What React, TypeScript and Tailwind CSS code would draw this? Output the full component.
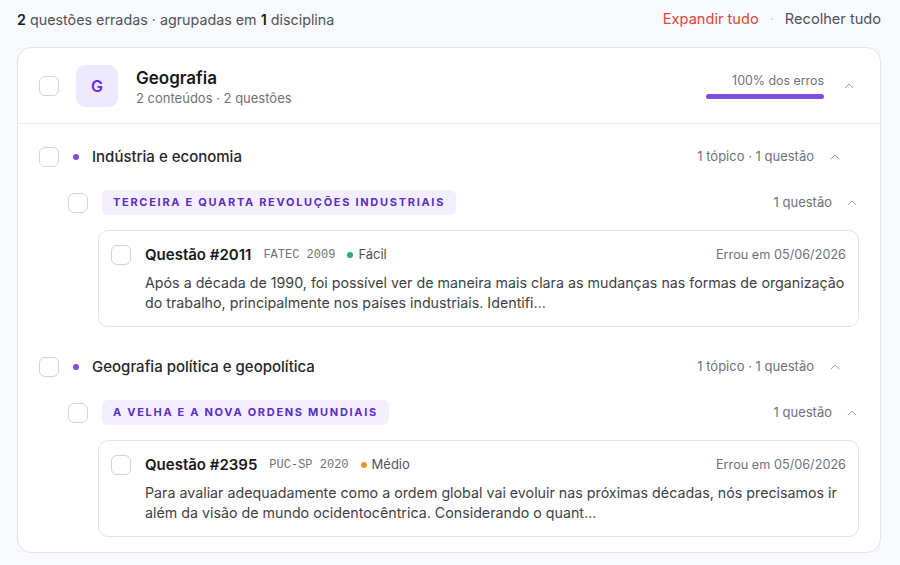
import { ChevronUp } from "lucide-react"

type Question = {
  id: number
  source: string
  level: "Fácil" | "Médio"
  date: string
  text: string
}

type Topic = {
  title: string
  meta: string
  subtopic: string
  subMeta: string
  question: Question
}

const topics: Topic[] = [
  {
    title: "Indústria e economia",
    meta: "1 tópico · 1 questão",
    subtopic: "Terceira e quarta revoluções industriais",
    subMeta: "1 questão",
    question: {
      id: 2011,
      source: "FATEC 2009",
      level: "Fácil",
      date: "Errou em 05/06/2026",
      text: "Após a década de 1990, foi possível ver de maneira mais clara as mudanças nas formas de organização do trabalho, principalmente nos países industriais. Identifi…",
    },
  },
  {
    title: "Geografia política e geopolítica",
    meta: "1 tópico · 1 questão",
    subtopic: "A velha e a nova ordens mundiais",
    subMeta: "1 questão",
    question: {
      id: 2395,
      source: "PUC-SP 2020",
      level: "Médio",
      date: "Errou em 05/06/2026",
      text: "Para avaliar adequadamente como a ordem global vai evoluir nas próximas décadas, nós precisamos ir além da visão de mundo ocidentocêntrica. Considerando o quant…",
    },
  },
]

function Checkbox() {
  return <div className="w-5 h-5 shrink-0 rounded-[6px] border border-[#d4d4d8] bg-white" />
}

function QuestionCard({ q }: { q: Question }) {
  return (
    <div className="ml-[59px] rounded-[10px] border border-[#e4e4e7] bg-white pl-3 pr-3 pt-[14px] pb-[13px] flex gap-[14px]">
      <Checkbox />
      <div className="flex-1 min-w-0">
        <div className="flex items-center h-5">
          <span className="text-[15px] font-semibold text-[#18181b]">Questão #{q.id}</span>
          <span className="ml-3 text-[12px] text-[#71717a]" style={{ fontFamily: "'Liberation Mono', monospace" }}>
            {q.source}
          </span>
          <span className="ml-3 flex items-center gap-[5px] text-[13px] text-[#52525b]">
            <span className={q.level === "Fácil" ? "w-[6px] h-[6px] rounded-full bg-[#22b07d]" : "w-[6px] h-[6px] rounded-full bg-[#f0932b]"} />
            {q.level}
          </span>
          <span className="ml-auto text-[12.7px] text-[#71717a]">{q.date}</span>
        </div>
        <p className="mt-[8px] text-[14.25px] leading-5 text-[#3f3f46]">{q.text}</p>
      </div>
    </div>
  )
}

function TopicBlock({ t }: { t: Topic }) {
  return (
    <div>
      <div className="flex items-center h-5 pr-[16px]">
        <Checkbox />
        <span className="ml-[14px] w-[6px] h-[6px] rounded-full bg-[#7c4fe0]" />
        <span className="ml-[13px] text-[15px] font-medium text-[#27272a]">{t.title}</span>
        <span className="ml-auto text-[13px] text-[#71717a]">{t.meta}</span>
        <ChevronUp className="ml-[13px] w-[16px] h-[16px] text-[#a1a1aa]" strokeWidth={1.5} />
      </div>
      <div className="mt-[23px] ml-[29px] flex items-center h-[25px]">
        <Checkbox />
        <span className="ml-[14px] h-[25px] px-[11px] flex items-center rounded-[6px] bg-[#f3effe] text-[11px] font-bold uppercase tracking-[0.155em] text-[#5b2ec4]">
          {t.subtopic}
        </span>
        <span className="ml-auto text-[13px] text-[#71717a]">{t.subMeta}</span>
        <ChevronUp className="ml-[12px] mr-[-1px] w-[16px] h-[16px] text-[#a1a1aa]" strokeWidth={1.5} />
      </div>
      <div className="mt-[15px]">
        <QuestionCard q={t.question} />
      </div>
    </div>
  )
}

export default function App() {
  return (
    <div className="w-[900px] h-[565px] overflow-hidden bg-[#f8f9fb] pl-[17px] pr-[19px] pt-[10px]" style={{ fontFamily: "Inter, 'Noto Sans', sans-serif" }}>
      <div className="flex items-center h-5 text-[14px]">
        <p className="text-[14.3px] text-[#52525b]">
          <b className="font-semibold text-[#18181b]">2</b> questões erradas · agrupadas em{" "}
          <b className="font-semibold text-[#18181b]">1</b> disciplina
        </p>
        <div className="ml-auto flex items-center text-[14.6px]">
          <span className="text-[#e0453a]">Expandir tudo</span>
          <span className="mx-[11px] text-[#d4d4d8]">·</span>
          <span className="text-[#52525b]">Recolher tudo</span>
        </div>
      </div>

      <div className="mt-[17px] rounded-[14px] border border-[#e4e4e7] bg-white">
        <div className="flex items-center h-[76px] px-[21px] border-b border-[#ececef]">
          <Checkbox />
          <div className="ml-[17px] w-[42px] h-[42px] rounded-[9px] bg-[#ede9fe] flex items-center justify-center text-[16px] font-semibold text-[#6d28d9]">
            G
          </div>
          <div className="ml-[18px]">
            <div className="text-[17px] font-semibold text-[#18181b] leading-6">Geografia</div>
            <div className="text-[13px] text-[#71717a] leading-4">2 conteúdos · 2 questões</div>
          </div>
          <div className="ml-auto flex flex-col items-end">
            <span className="text-[12.4px] text-[#71717a] leading-4">100% dos erros</span>
            <div className="mt-[5px] w-[118px] h-[5px] rounded-full bg-[#7c4fe0]" />
          </div>
          <ChevronUp className="ml-[17px] mr-[2px] w-[16px] h-[16px] text-[#a1a1aa]" strokeWidth={1.5} />
        </div>

        <div className="px-[21px] pt-[23px] pb-[15px] flex flex-col gap-[30px]">
          {topics.map((t) => (
            <TopicBlock key={t.title} t={t} />
          ))}
        </div>
      </div>
    </div>
  )
}
